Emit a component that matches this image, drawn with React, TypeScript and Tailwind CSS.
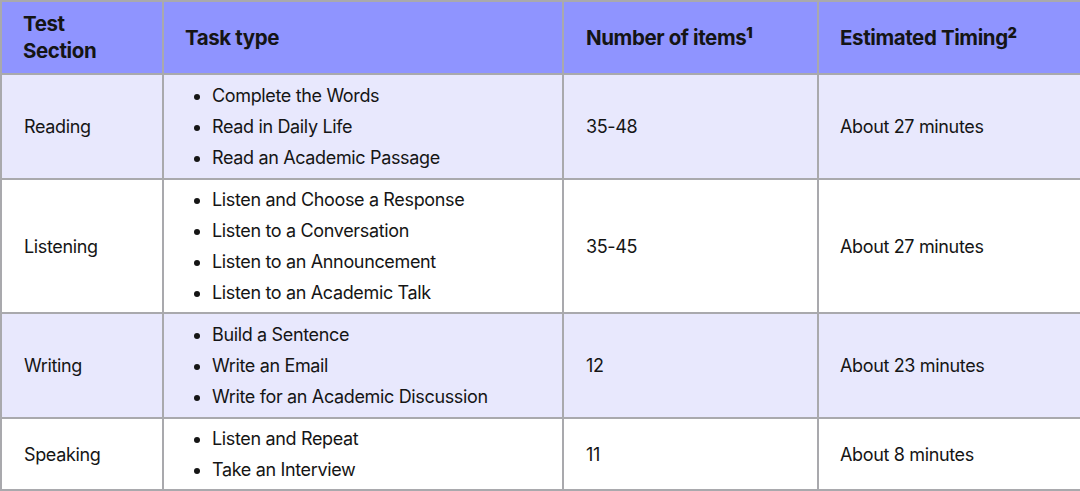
const rows = [
  {
    section: 'Reading',
    tasks: ['Complete the Words', 'Read in Daily Life', 'Read an Academic Passage'],
    items: '35-48',
    timing: 'About 27 minutes',
    shaded: true,
    height: 'h-[105px]',
  },
  {
    section: 'Listening',
    tasks: [
      'Listen and Choose a Response',
      'Listen to a Conversation',
      'Listen to an Announcement',
      'Listen to an Academic Talk',
    ],
    items: '35-45',
    timing: 'About 27 minutes',
    shaded: false,
    height: 'h-[134px]',
  },
  {
    section: 'Writing',
    tasks: ['Build a Sentence', 'Write an Email', 'Write for an Academic Discussion'],
    items: '12',
    timing: 'About 23 minutes',
    shaded: true,
    height: 'h-[105px]',
  },
  {
    section: 'Speaking',
    tasks: ['Listen and Repeat', 'Take an Interview'],
    items: '11',
    timing: 'About 8 minutes',
    shaded: false,
    height: 'h-[72px]',
  },
];

export default function App() {
  return (
    <div className="w-[1080px] h-[491px] bg-white font-['Inter',sans-serif] text-[#151515]">
      <table className="w-[1080px] table-fixed border-collapse border-2 border-[#a9a9ad]">
        <colgroup>
          <col className="w-[162px]" />
          <col className="w-[400px]" />
          <col className="w-[255px]" />
          <col className="w-[263px]" />
        </colgroup>
        <thead>
          <tr className="h-[73px] bg-[#8f94ff] text-left text-[20.5px] font-extrabold leading-[27px] tracking-[-0.4px]">
            <th className="border-2 border-[#a9a9ad] pl-[21px] pr-2 pb-[1px]">
              Test
              <br />
              Section
            </th>
            <th className="border-2 border-[#a9a9ad] pl-[21px] pb-[1px]">Task type</th>
            <th className="border-2 border-[#a9a9ad] pl-[22px] pb-[1px]">
              Number of items<sup className="text-[14px] font-black">1</sup>
            </th>
            <th className="border-2 border-[#a9a9ad] pl-[21px] pb-[1px]">
              Estimated Timing<sup className="text-[14px] font-black">2</sup>
            </th>
          </tr>
        </thead>
        <tbody className="text-[18px] leading-[31px] tracking-[-0.35px]">
          {rows.map((r) => (
            <tr key={r.section} className={`${r.height} ${r.shaded ? 'bg-[#e8e8fd]' : 'bg-white'}`}>
              <td className="border-2 border-[#a9a9ad] pl-[22px]">{r.section}</td>
              <td className="border-2 border-[#a9a9ad] py-0 pl-[48px]">
                <ul className="list-disc">
                  {r.tasks.map((t) => (
                    <li key={t}>{t}</li>
                  ))}
                </ul>
              </td>
              <td className="border-2 border-[#a9a9ad] pl-[22px]">{r.items}</td>
              <td className="border-2 border-[#a9a9ad] pl-[21px]">{r.timing}</td>
            </tr>
          ))}
        </tbody>
      </table>
    </div>
  );
}
